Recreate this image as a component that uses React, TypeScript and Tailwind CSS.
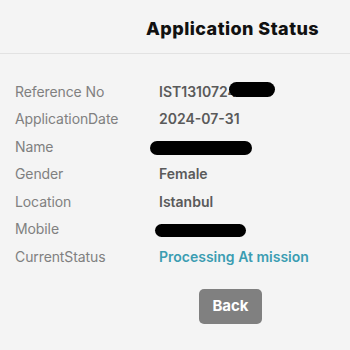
export default function App() {
  const rows: { label: string; value: React.ReactNode }[] = [
    {
      label: "Reference No",
      value: (
        <span className="relative inline-block">
          IST1310724
          <span className="absolute left-[70px] top-[1px] h-[15px] w-[46px] rounded-full bg-black" />
        </span>
      ),
    },
    { label: "ApplicationDate", value: "2024-07-31" },
    {
      label: "Name",
      value: <span className="ml-[-9px] inline-block h-[14px] w-[102px] rounded-full bg-black align-middle" />,
    },
    { label: "Gender", value: "Female" },
    { label: "Location", value: "Istanbul" },
    {
      label: "Mobile",
      value: <span className="ml-[-4px] inline-block h-[13px] w-[91px] rounded-full bg-black align-middle" />,
    },
    {
      label: "CurrentStatus",
      value: <span className="text-[#3b9db2]">Processing At mission</span>,
    },
  ];

  return (
    <div className="h-[350px] w-[350px] bg-[#f4f4f4] font-['Inter',sans-serif]">
      <div className="flex h-[54px] items-center border-b border-[#e2e2e2] pl-[146px] pt-[4px]">
        <h1 className="text-[18px] font-extrabold tracking-[0.45px] text-[#111]">Application Status</h1>
      </div>
      <div className="flex flex-col gap-[7.5px] px-[15px] pt-[27px]">
        {rows.map((r) => (
          <div key={r.label} className="flex h-[20px] items-center text-[14px]">
            <span className="w-[144px] tracking-[-0.1px] text-[#808080]">{r.label}</span>
            <span className="font-semibold text-[#5a5a5a]">{r.value}</span>
          </div>
        ))}
      </div>
      <div className="flex justify-center pl-[111px] pt-[23px]">
        <button className="h-[35px] w-[63px] rounded-[5px] bg-[#808080] text-[15px] font-bold text-white">
          Back
        </button>
      </div>
    </div>
  );
}
